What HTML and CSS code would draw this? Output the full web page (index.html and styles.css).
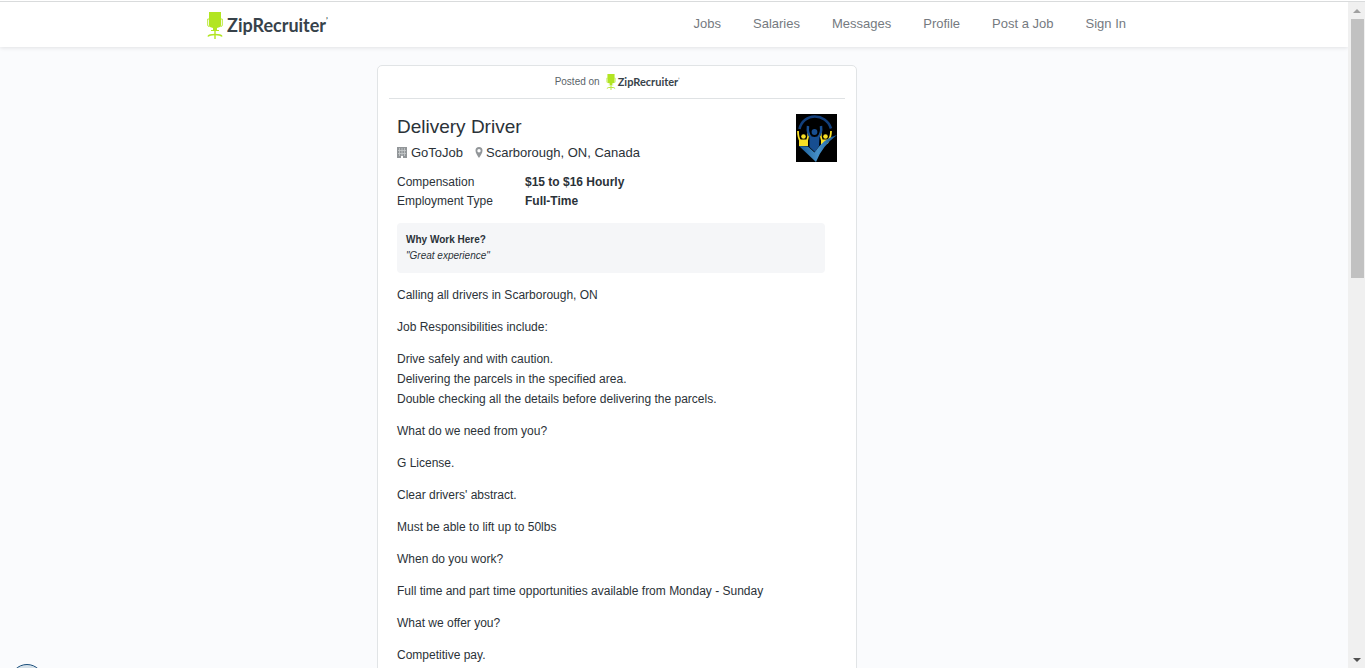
FILE: index.html
```html
<!DOCTYPE html>
<html lang="en">
<head>
<meta charset="utf-8">
<meta name="viewport" content="width=device-width, initial-scale=1">
<title>Delivery Driver - ZipRecruiter</title>
<link rel="stylesheet" href="styles.css">
</head>
<body>
<svg class="defs" aria-hidden="true">
  <symbol id="chair" viewBox="0 0 16 27">
    <path d="M2 0h12v13q0 2-1 2l-3 1H6l-3-1q-1 0-1-2z" fill="#b2e522"/>
    <path d="M2.500 7H.7v6q0 1.500 1.500 1.500M13.500 7h1.800v6q0 1.500-1.500 1.500" fill="none" stroke="#b2e522" stroke-width=".9"/>
    <path d="M6 15h4v3H6zM7.300 18h1.400v9H7.300zM4 18h8v1H4z" fill="#b2e522"/>
    <path d="M1 24.500q1-2 7-2t7 2" fill="none" stroke="#b2e522" stroke-width="1.500"/>
  </symbol>
</svg>
<div class="window">
  <div class="page">
    <header class="header">
      <div class="header-inner">
        <a class="brand" href="#"><svg class="chair"><use href="#chair"/></svg><span>ZipRecruiter</span><sup>’</sup></a>
        <nav class="nav">
          <a href="#">Jobs</a><a href="#">Salaries</a><a href="#">Messages</a><a href="#">Profile</a><a href="#">Post a Job</a><a href="#">Sign In</a>
        </nav>
      </div>
    </header>
    <main class="content">
      <article class="card">
        <div class="posted"><span class="posted-label">Posted on</span>
          <a class="brand brand-small" href="#"><svg class="chair"><use href="#chair"/></svg><span>ZipRecruiter</span><sup>’</sup></a>
        </div>
        <div class="job">
          <div class="job-head">
            <div>
              <h1>Delivery Driver</h1>
              <div class="meta">
                <span class="meta-item company"><svg width="10" height="12" viewBox="0 0 10 12"><path d="M0 0h10v11H6V9H4v2H0z" fill="#929699"/><path d="M2.500 1v8M5 1v8M7.500 1v8M1 3.500h8M1 6.500h8" stroke="#c8cbcd" stroke-width=".8"/></svg>GoToJob</span>
                <span class="meta-item pin"><svg width="8" height="12" viewBox="0 0 8 12"><path fill-rule="evenodd" d="M4 0a3.500 3.500 0 0 1 3.500 3.500C7.500 6 5.500 8.500 4 11 2.500 8.500.5 6 .5 3.500A3.500 3.500 0 0 1 4 0zm0 2a1.700 1.700 0 1 0 0 3.400A1.700 1.700 0 0 0 4 2z" fill="#929699"/></svg>Scarborough, ON, Canada</span>
              </div>
            </div>
            <svg class="company-logo" viewBox="0 0 41 48" role="img" aria-label="GoToJob logo">
              <defs><linearGradient id="check" x1="0" x2="1" y1="0" y2="0"><stop offset="0" stop-color="#185b96"/><stop offset=".5" stop-color="#4690c8"/><stop offset="1" stop-color="#12528f"/></linearGradient></defs>
              <path fill="#000" d="M0 0h41v48H0z"/>
              <path d="M3.500 15C7-1.500 30-1.500 35 14.500" fill="none" stroke="#123f7c" stroke-width="2.600"/>
              <g fill="#f8df25"><circle cx="7.500" cy="22.500" r="2.300"/><circle cx="29.500" cy="22.500" r="2.300"/><path d="M3 25.500h9V32H3zM25 25.500h9l-2 4-5 2h-2z"/></g>
              <path d="M2 17q0 7 2.500 10M12 17q1 5-1 10M25 17q-1 5 1 10M35 17q0 6-3 10" fill="none" stroke="#f8df25" stroke-width="1.800"/>
              <circle cx="18.500" cy="18" r="2.900" fill="#174e91"/>
              <path d="M12 12q-1 8 3 11M25 12q1 8-3 11" fill="none" stroke="#174e91" stroke-width="2.500"/>
              <path d="M13.500 22l5 1 5-1-.5 10-4 6-5.500-5z" fill="#174e91"/>
              <path d="M3 32l9 .5 6.500 6Q28 24 41 21 26 32 20 48z" fill="url(#check)"/>
            </svg>
          </div>
          <dl class="facts">
            <dt>Compensation</dt><dd>$15 to $16 Hourly</dd>
            <dt>Employment Type</dt><dd>Full-Time</dd>
          </dl>
          <section class="why"><h2>Why Work Here?</h2><q>Great experience</q></section>
          <div class="description">
            <p>Calling all drivers in Scarborough, ON</p>
            <p>Job Responsibilities include:</p>
            <p>Drive safely and with caution.<br>Delivering the parcels in the specified area.<br>Double checking all the details before delivering the parcels.</p>
            <p>What do we need from you?</p>
            <p>G License.</p>
            <p>Clear drivers' abstract.</p>
            <p>Must be able to lift up to 50lbs</p>
            <p>When do you work?</p>
            <p>Full time and part time opportunities available from Monday - Sunday</p>
            <p>What we offer you?</p>
            <p>Competitive pay.</p>
          </div>
        </div>
      </article>
    </main>
  </div>
  <div class="scrollbar" aria-hidden="true">
    <svg class="arrow" viewBox="0 0 17 17"><path d="M5 11h8L9 7z" fill="#a0a0a0"/></svg>
    <div class="track"><div class="thumb"></div></div>
    <svg class="arrow" viewBox="0 0 17 17"><path d="M5 7h8l-4 4z" fill="#505050"/></svg>
  </div>
</div>
<button class="help" aria-label="Help"></button>
</body>
</html>
```
FILE: styles.css
```css
* { box-sizing: border-box; }

body {
  margin: 0;
  color: #2b3238;
  font: 12px/20px "Liberation Sans", Arial, sans-serif;
}

a { color: inherit; text-decoration: none; }

.defs { position: absolute; width: 0; height: 0; }

.window {
  display: flex;
  height: 100vh;
  border-top: 1px solid #fff;
  overflow: hidden;
}

.page {
  flex: 1;
  min-width: 0;
  overflow: hidden;
  background: #fafbfd;
}

.header {
  position: relative;
  background: #fff;
  border-top: 1px solid #d9dbdc;
  box-shadow: 0 1px 4px rgba(0, 0, 0, .1);
}

.header-inner {
  display: flex;
  align-items: center;
  justify-content: space-between;
  max-width: 936px;
  height: 45px;
  margin: 0 auto;
}

.brand {
  display: flex;
  align-items: center;
  color: #37424a;
  font: 700 18px/24px Lato, sans-serif;
}

.brand .chair { width: 18px; height: 27px; margin: 2px 3px 0 0; }

.brand sup { align-self: flex-start; font-size: 8px; line-height: 20px; }

.nav { display: flex; }

.nav a {
  padding: 0 16px 2px;
  color: #757a7f;
  font-size: 13px;
}

.content {
  max-width: 594px;
  margin: 0 auto;
  padding-top: 18px;
}

.card {
  max-width: 480px;
  background: #fff;
  border: 1px solid #e1e4e6;
  border-radius: 5px;
}

.posted {
  display: flex;
  align-items: center;
  justify-content: center;
  gap: 6px;
  height: 33px;
  margin: 0 11px;
  border-bottom: 1px solid #dfe2e4;
}

.posted-label { color: #5b6369; font-size: 10px; }

.brand-small { font-size: 11px; line-height: 16px; }

.brand-small .chair { width: 10px; height: 16px; margin: 0 2px 0 0; }

.brand-small sup { font-size: 5px; line-height: 12px; }

.job { padding: 15px 19px; }

.job-head { display: flex; justify-content: space-between; }

.company-logo { width: 41px; height: 48px; }

h1 {
  margin: 0;
  font-size: 19px;
  font-weight: 400;
  line-height: 25px;
}

.meta {
  display: flex;
  gap: 12px;
  font-size: 13px;
  line-height: 28px;
}

.meta-item { display: flex; align-items: center; gap: 4px; }

.pin { gap: 3px; }

.facts {
  display: grid;
  grid-template-columns: 128px 1fr;
  margin: 6px 0 0;
  line-height: 19px;
}

.facts dd { margin: 0; font-weight: 700; }

.why {
  margin: 12px 12px 0 0;
  padding: 9px;
  background: #f5f6f8;
  border-radius: 4px;
  font-size: 10px;
  line-height: 16px;
}

.why h2 { margin: 0; font-size: 10px; }

.why q { font-style: italic; quotes: '"' '"'; }

.description { padding-top: 12px; }

.description p { margin: 0 0 12px; }

.scrollbar {
  display: flex;
  flex-direction: column;
  width: 17px;
  background: #f0f0f0;
  border-top: 1px solid #d9dbdc;
}

.arrow { width: 17px; height: 17px; }

.track { flex: 1; padding: 0 1px 0 3px; }

.thumb { height: 41%; background: #c1c1c1; }

.help {
  position: fixed;
  bottom: -30px;
  left: 10px;
  width: 34px;
  height: 34px;
  padding: 0;
  background: #d5e1ea;
  border: 1px solid #1c4f7c;
  border-radius: 50%;
}
```
